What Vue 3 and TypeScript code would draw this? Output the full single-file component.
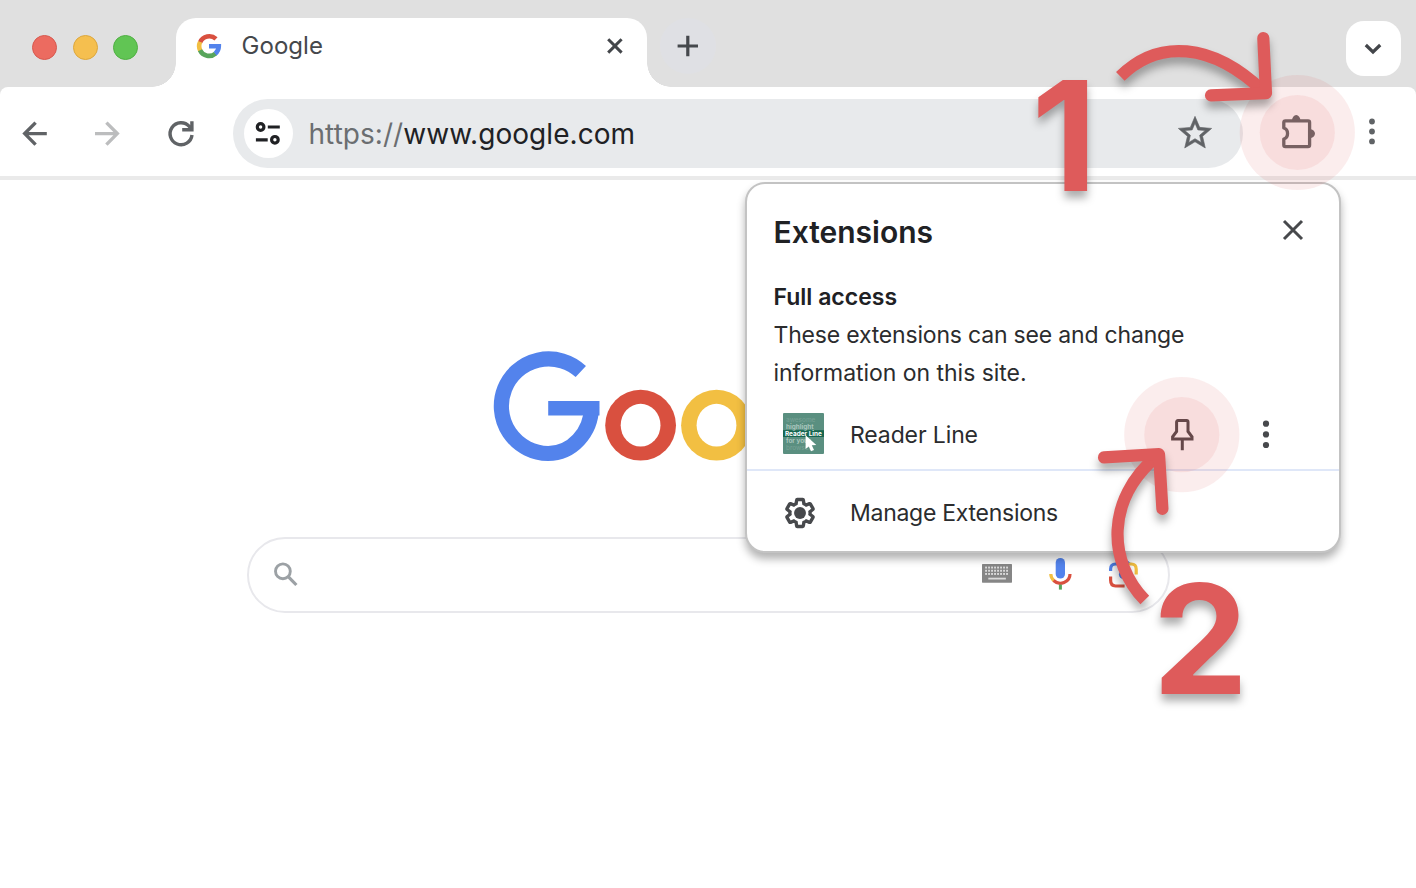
<script setup lang="ts">
interface Row {
  y: number
  label: string
  tone: string
}

const thumbRows: Row[] = [
  { y: 8.6, label: 'awesome', tone: 'faint' },
  { y: 15.6, label: 'highlight', tone: 'mid' },
  { y: 22.7, label: 'Reader Line', tone: 'full' },
  { y: 30, label: 'for your', tone: 'mid' },
  { y: 37, label: 'browser', tone: 'faint' },
]
const keyColumns = [4, 7, 10, 13, 16, 19, 22, 25]
const keyRows = [3.5, 6.7, 9.9]
const pulses = [
  { x: 1297.3, y: 132.5 },
  { x: 1181.8, y: 434.7 },
]
</script>

<template>
  <div class="browser">
    <header class="tabstrip">
      <div class="lights">
        <span class="light red"></span>
        <span class="light amber"></span>
        <span class="light green"></span>
      </div>
      <div class="tab">
        <svg class="favicon" width="26" height="26" viewBox="0 0 26 26" fill="none" stroke-width="4.6">
          <path d="M4.1 9.3A10 10 0 0 1 20 5.9" stroke="#d9503f" />
          <path d="M4.3 17.7A10 10 0 0 1 4.1 8.9" stroke="#f2bf42" />
          <path d="M19.6 20.4A10 10 0 0 1 4 17.2" stroke="#58a55c" />
          <path d="M13 13.2H22.8A10 10 0 0 1 19.2 20.7" stroke="#5383ec" />
        </svg>
        <span class="tab-title">Google</span>
        <svg class="tab-close" width="16" height="16" viewBox="0 0 16 16"><path d="M1.2 1.2l13.4 13.4M14.6 1.2L1.2 14.6" stroke="#43464a" stroke-width="3" /></svg>
      </div>
      <div class="new-tab">
        <svg width="22" height="22" viewBox="0 0 22 22"><path d="M.6 11h20.4M10.8 .8v20.4" stroke="#45484c" stroke-width="3.2" /></svg>
      </div>
      <div class="tab-search">
        <svg width="18" height="12" viewBox="0 0 18 12"><path d="M1.8 2l7.2 7 7.2-7" fill="none" stroke="#43464a" stroke-width="3.2" /></svg>
      </div>
    </header>

    <nav class="toolbar">
      <svg class="back" width="26" height="26" viewBox="0 0 26 26" fill="none" stroke="#606366" stroke-width="3.4"><path d="M24.8 12.6H3M13.6 1.6L2.7 12.6 13.6 23.6" /></svg>
      <svg class="forward" width="26" height="26" viewBox="0 0 26 26" fill="none" stroke="#bcbdbe" stroke-width="3.4"><path d="M1 12.6h22M12.4 1.6L23.3 12.6 12.4 23.6" /></svg>
      <svg class="reload" width="28" height="28" viewBox="0 0 28 28" fill="none" stroke="#606366" stroke-width="3.4">
        <path d="M25 15A11 11 0 1 1 22.3 6.4L25 9.2" />
        <path d="M24.9 1.2V9.8H15.2" />
        <path d="M25 4v6h-6z" fill="#606366" stroke="none" />
      </svg>
      <div class="omnibox">
        <div class="site-info">
          <svg width="26" height="24" viewBox="0 0 26 24" fill="none" stroke="#202124" stroke-width="3.2">
            <circle cx="5.6" cy="5" r="3.3" /><path d="M12.8 5h12M.9 17.9h11.8" /><circle cx="19.9" cy="17.8" r="3.3" />
          </svg>
        </div>
        <span class="url"><span class="scheme">https://</span>www.google.com</span>
        <svg class="star" width="40" height="40" viewBox="0 0 24 24" fill="#606366" stroke="#606366" stroke-width=".35">
          <path d="M22 9.24l-7.19-.62L12 2 9.19 8.63 2 9.24l5.46 4.73L5.82 21 12 17.27 18.18 21l-1.63-7.03L22 9.24zM12 15.4l-3.76 2.27 1-4.28-3.32-2.88 4.38-.38L12 6.1l1.71 4.04 4.38.38-3.32 2.88 1 4.28L12 15.4z" />
        </svg>
      </div>
      <svg class="puzzle" width="36" height="38" viewBox="0 0 36 38">
        <path d="M3.8 9.5q0-1.7 1.7-1.7H28q1.6 0 1.6 1.6V32q0 1.6-1.6 1.6H5.4q-1.6 0-1.6-1.6V26C8.8 24.6 8.8 16.4 3.8 15Z" fill="none" stroke="#606366" stroke-width="3.3" stroke-linejoin="round" />
        <path d="M12 7.5a4.2 5.4 0 0 1 8.4 0zM30 16.2a5 4.4 0 0 1 0 8.8z" fill="#606366" />
      </svg>
      <svg class="menu" width="8" height="28" viewBox="0 0 8 28" fill="#606366"><circle cx="4" cy="3.5" r="2.9" /><circle cx="4" cy="13.5" r="2.9" /><circle cx="4" cy="23.4" r="2.9" /></svg>
    </nav>

    <main class="page">
      <svg class="logo" width="340" height="112" viewBox="0 0 340 112">
        <path d="M87.8 20.5A47.3 47.3 0 1 0 55.1 102.5A43.6 47.3 0 0 0 98.5 56" fill="none" stroke="#5383ec" stroke-width="15.2" />
        <path d="M55.2 50H106.5V64.4H55.2z" fill="#5383ec" />
        <circle cx="147.6" cy="74.2" r="35.4" fill="#d9503f" /><ellipse cx="147.6" cy="74.2" rx="19.9" ry="21.4" fill="#fff" />
        <circle cx="223.5" cy="74.2" r="35.4" fill="#f2bf42" /><ellipse cx="223.5" cy="74.2" rx="19.9" ry="21.4" fill="#fff" />
      </svg>
      <div class="search">
        <svg class="glass" width="26" height="26" viewBox="0 0 26 26" fill="none" stroke="#9ca1a5"><circle cx="8.9" cy="10.3" r="7.4" stroke-width="2.9" /><path d="M14.2 15.6l8.2 8.4" stroke-width="3.2" /></svg>
        <svg class="keyboard" width="30" height="19" viewBox="0 0 30 19">
          <rect width="30" height="18.7" rx=".6" fill="#868686" />
          <g fill="#dadada">
            <template v-for="ky in keyRows" :key="ky">
              <rect v-for="kx in keyColumns" :key="kx" :x="kx - 0.9" :y="ky - 0.9" width="1.9" height="1.9" />
            </template>
            <rect x="6.3" y="13.7" width="17.6" height="1.8" />
          </g>
        </svg>
        <svg class="mic" width="24" height="34" viewBox="0 0 24 34" fill="none">
          <rect x="7.7" y="1" width="9.3" height="20.5" rx="4.6" fill="#5383ec" />
          <path d="M2.8 17A9.6 9.2 0 0 0 6 23.8" stroke="#f2bf42" stroke-width="3.2" />
          <path d="M5.6 23.5A9.6 9.2 0 0 0 22 17" stroke="#d9503f" stroke-width="3.2" />
          <path d="M12.4 27.6v5" stroke="#58a55c" stroke-width="3" />
        </svg>
        <svg class="lens" width="30" height="28" viewBox="0 0 30 28" fill="none" stroke-width="3.2">
          <path d="M1.6 11V9q0-5 5-5h3l2-1.5h7L20.6 4" stroke="#5383ec" />
          <path d="M19.6 4h2.6q5 0 5 5v5.4" stroke="#f2bf42" />
          <path d="M1.6 16.5V20q0 6 5 6h9" stroke="#d9503f" />
          <circle cx="14.6" cy="14.5" r="4.7" fill="#5383ec" />
        </svg>
      </div>
    </main>

    <section class="popup">
      <div class="popup-head">
        <h1>Extensions</h1>
        <svg width="22" height="22" viewBox="0 0 22 22"><path d="M2 2l18 18M20 2L2 20" stroke="#47494c" stroke-width="3" /></svg>
      </div>
      <h2>Full access</h2>
      <p><span class="line first">These extensions can see and change</span><span class="line second">information on this site.</span></p>
      <div class="ext-row">
        <svg class="thumb" width="41" height="41" viewBox="0 0 41 41">
          <rect width="41" height="41" rx="1" fill="#5a8f80" />
          <rect y="17.2" width="41" height="6.8" fill="#176650" />
          <text v-for="row in thumbRows" :key="row.label" :class="row.tone" :x="row.tone === 'full' ? 2 : 3" :y="row.y">{{ row.label }}</text>
          <path d="M22.6 22.2V36l3.2-2.6 2.2 4.9 3-1.3-2.2-4.8 4.5-.2z" fill="#fff" />
        </svg>
        <span class="row-label reader">Reader Line</span>
        <svg class="pin" width="28" height="36" viewBox="0 0 28 36" fill="none" stroke="#4a4547" stroke-width="3"><path d="M8.6 6q0-1.4 1.4-1.4h8.6q1.4 0 1.4 1.4V15.5L24 20.8V23H4.6V20.8L8.6 15.5ZM14.3 23v11.2" /></svg>
        <svg class="dots" width="8" height="30" viewBox="0 0 8 30" fill="#47494c"><circle cx="4" cy="4.7" r="3.1" /><circle cx="4" cy="15.4" r="3.1" /><circle cx="4" cy="26" r="3.1" /></svg>
      </div>
      <div class="manage-row">
        <svg width="34" height="34" viewBox="0 0 24 24">
          <path fill="none" stroke="#47494c" stroke-width="2.5" transform="translate(12 12) scale(.95) translate(-12 -12)" d="M19.43 12.98c.04-.32.07-.64.07-.98 0-.34-.03-.66-.07-.98l2.11-1.65c.19-.15.24-.42.12-.64l-2-3.46c-.09-.16-.26-.25-.44-.25-.06 0-.12.01-.17.03l-2.49 1c-.52-.4-1.08-.73-1.69-.98l-.38-2.65C14.46 2.18 14.25 2 14 2h-4c-.25 0-.46.18-.49.42l-.38 2.65c-.61.25-1.17.59-1.69.98l-2.49-1c-.06-.02-.12-.03-.18-.03-.17 0-.34.09-.43.25l-2 3.46c-.13.22-.07.49.12.64l2.11 1.65c-.04.32-.07.65-.07.98 0 .33.03.66.07.98l-2.11 1.65c-.19.15-.24.42-.12.64l2 3.46c.09.16.26.25.44.25.06 0 .12-.01.17-.03l2.49-1c.52.4 1.08.73 1.69.98l.38 2.65c.03.24.24.42.49.42h4c.25 0 .46-.18.49-.42l.38-2.65c.61-.25 1.17-.59 1.69-.98l2.49 1c.06.02.12.03.18.03.17 0 .34-.09.43-.25l2-3.46c.12-.22.07-.49-.12-.64l-2.11-1.65z" />
          <circle cx="12" cy="12" r="4.2" fill="#47494c" />
        </svg>
        <span class="row-label manage">Manage Extensions</span>
      </div>
    </section>

    <svg class="annotations" width="1416" height="888" viewBox="0 0 1416 888">
      <g v-for="p in pulses" :key="p.x" fill="#de5b5b">
        <circle :cx="p.x" :cy="p.y" r="57.6" fill-opacity=".11" />
        <circle :cx="p.x" :cy="p.y" r="37.6" fill-opacity=".1" />
      </g>
      <g class="marks">
        <g fill="none" stroke="#de5b5b" stroke-width="12.2" stroke-linejoin="round">
          <path d="M1120.3 76.4C1158 39 1212 42 1264 92" />
          <path d="M1263.3 38L1266 93.2L1211 95.3" stroke-linecap="round" />
          <path d="M1144.8 600C1108 562 1105 500 1157 456" />
          <path d="M1104 457.4L1159 454.2L1162.4 508.8" stroke-linecap="round" />
        </g>
        <text class="digit" x="1031.6" y="190.8">1</text>
        <text class="digit" x="1152.6" y="693.5">2</text>
      </g>
    </svg>
  </div>
</template>

<style>
body {
  margin: 0;
}
</style>

<style scoped>
.browser {
  position: relative;
  width: 1416px;
  height: 888px;
  overflow: hidden;
  background: #fff;
  font-family: Inter, "Liberation Sans", sans-serif;
  color: #202124;
}
svg {
  display: block;
  flex: none;
}
.tabstrip {
  display: flex;
  height: 95px;
  box-sizing: border-box;
  background: #e0e0e0;
}
.lights {
  display: flex;
  gap: 15.6px;
  width: 144px;
  padding: 35px 0 0 32px;
}
.light {
  width: 25px;
  height: 25px;
  box-sizing: border-box;
  border-radius: 50%;
  border: 1px solid;
}
.red {
  background: #ec6b60;
  border-color: #d7594f;
}
.amber {
  background: #f5bf4f;
  border-color: #dca73d;
}
.green {
  background: #61c554;
  border-color: #50b043;
}
.tab {
  position: relative;
  display: flex;
  align-items: center;
  width: 471px;
  height: 69px;
  margin-top: 18px;
  padding: 0 24px 13px 20px;
  box-sizing: border-box;
  background: #fff;
  border-radius: 20px 20px 0 0;
}
.tab::before,
.tab::after {
  content: "";
  position: absolute;
  bottom: 0;
  width: 24px;
  height: 24px;
}
.tab::before {
  right: 100%;
  background: radial-gradient(circle at 0 0, transparent 23.5px, #fff 24px);
}
.tab::after {
  left: 100%;
  background: radial-gradient(circle at 100% 0, transparent 23.5px, #fff 24px);
}
.tab-title {
  margin-left: 19.5px;
  font-size: 24px;
  line-height: 30px;
  letter-spacing: 0.05px;
  color: #45484c;
}
.tab-close {
  margin-left: auto;
}
.new-tab {
  display: flex;
  align-items: center;
  justify-content: center;
  width: 56px;
  height: 56px;
  margin: 18px 0 0 12.5px;
  border-radius: 50%;
  background: #dfe0e4;
}
.tab-search {
  display: flex;
  align-items: center;
  justify-content: center;
  width: 55px;
  height: 55px;
  margin: 21px 15.5px 0 auto;
  border-radius: 18px;
  background: #fff;
}
.toolbar {
  position: relative;
  display: flex;
  align-items: center;
  height: 93px;
  margin-top: -8px;
  box-sizing: border-box;
  background: #fff;
  border-bottom: 4px solid #eaeaea;
  border-radius: 8px 8px 0 0;
  padding: 4px 0 0 22px;
}
.forward {
  margin-left: 46px;
}
.reload {
  margin-left: 47px;
}
.omnibox {
  display: flex;
  align-items: center;
  width: 1010px;
  height: 69px;
  margin-left: 38px;
  padding: 0 28px 0 10.5px;
  box-sizing: border-box;
  border-radius: 35px;
  background: #e8eaec;
}
.site-info {
  display: flex;
  align-items: center;
  justify-content: center;
  width: 49px;
  height: 49px;
  border-radius: 50%;
  background: #fff;
}
.url {
  margin-left: 16px;
  font-size: 28px;
  line-height: 36px;
  letter-spacing: 0.05px;
  white-space: nowrap;
}
.scheme {
  color: #6b6e71;
}
.star {
  margin: -2px 0 0 auto;
}
.puzzle {
  margin: -3px 0 0 37px;
}
.menu {
  margin: -4px 0 0 51.5px;
}
.page {
  padding-top: 171px;
}
.logo {
  margin-left: 493px;
}
.search {
  display: flex;
  align-items: center;
  width: 923px;
  height: 76px;
  margin: 74px 0 0 247px;
  padding: 0 29px 2px 25px;
  box-sizing: border-box;
  border: 2px solid #e8e8ec;
  border-radius: 38px;
}
.glass {
  margin-right: auto;
}
.keyboard {
  margin-top: -1px;
}
.mic {
  margin-left: 36px;
}
.lens {
  margin-left: 37px;
}
.popup {
  position: absolute;
  left: 745px;
  top: 182px;
  width: 596px;
  height: 371px;
  box-sizing: border-box;
  border: 2px solid #c3c3c3;
  border-radius: 20px;
  background: #fff;
  box-shadow: 0 6px 9px rgba(0, 0, 0, 0.3);
}
.popup-head {
  display: flex;
  align-items: center;
  justify-content: space-between;
  height: 40px;
  margin: 28px 35px 0 26.5px;
}
.popup-head svg {
  margin-top: -5px;
}
h1,
h2,
p {
  margin: 0;
}
h1 {
  font-size: 30px;
  line-height: 41px;
  font-weight: 600;
}
h2 {
  margin: 26px 0 0 26.5px;
  font-size: 23px;
  line-height: 38px;
  font-weight: 600;
}
p {
  margin-left: 26.5px;
  font-size: 23px;
  line-height: 38px;
  color: #2b2c2e;
}
.line {
  display: block;
  white-space: nowrap;
}
.first {
  letter-spacing: -0.19px;
}
.second {
  letter-spacing: -0.04px;
}
.ext-row {
  display: flex;
  align-items: center;
  height: 79px;
  box-sizing: border-box;
  padding: 7px 69px 0 36px;
  border-bottom: 2px solid #dfe7f8;
}
.row-label {
  font-size: 23px;
  line-height: 30px;
  color: #2b2c2e;
  white-space: nowrap;
}
.reader {
  margin: 1px 0 0 26px;
  letter-spacing: -0.12px;
}
.pin {
  margin-left: auto;
}
.dots {
  margin-left: 66px;
}
.manage-row {
  display: flex;
  align-items: center;
  height: 84px;
  padding-left: 36px;
}
.manage {
  margin-left: 33px;
  letter-spacing: -0.27px;
}
.thumb {
  margin-top: -1px;
}
.thumb text {
  font-family: Inter, sans-serif;
  font-size: 6.4px;
  font-weight: 700;
  fill: #fff;
}
.thumb .faint {
  fill: #75a094;
  font-weight: 500;
}
.thumb .mid {
  fill: #a9c6bd;
}
.annotations {
  position: absolute;
  inset: 0;
  pointer-events: none;
}
.marks {
  filter: drop-shadow(0 7px 4px rgba(0, 0, 0, 0.32));
}
.digit {
  font-size: 152px;
  font-weight: 700;
  fill: #de5b5b;
}
</style>
